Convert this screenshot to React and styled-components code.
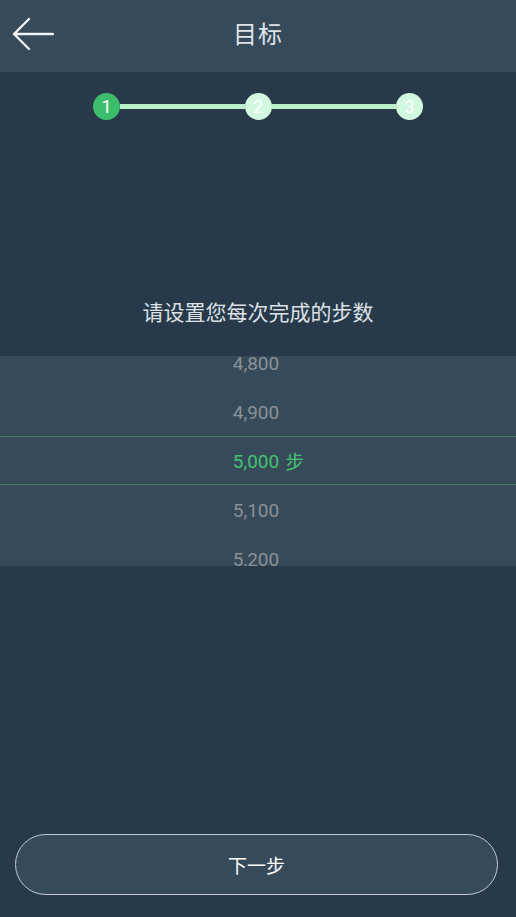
import styled, { createGlobalStyle } from "styled-components";

const GlobalStyle = createGlobalStyle`
  html, body {
    margin: 0;
    padding: 0;
    background: #283a4a;
    font-family: Roboto, "Noto Sans CJK SC", sans-serif;
  }
`;

const Page = styled.div`
  width: 516px;
  height: 917px;
  display: flex;
  flex-direction: column;
  background: #283a4a;
  overflow: hidden;
`;

const Header = styled.header`
  height: 72px;
  flex-shrink: 0;
  background: #364a5a;
  display: flex;
  align-items: center;
  justify-content: center;
  position: relative;
  .title {
    font-size: 24px;
    color: #dfe3e7;
    letter-spacing: 1px;
    margin-top: -7px;
  }
`;

const BackButton = styled.button`
  position: absolute;
  left: 10px;
  top: 16px;
  width: 46px;
  height: 36px;
  padding: 0;
  border: none;
  background: transparent;
  display: flex;
  align-items: center;
  justify-content: center;
`;

const Stepper = styled.div`
  display: flex;
  align-items: center;
  margin: 21px auto 0;
  width: 330px;
`;

const StepDot = styled.div`
  width: 27px;
  height: 27px;
  border-radius: 50%;
  flex-shrink: 0;
  background: ${(p) => (p.$active ? "#3cbd6c" : "#d2f9df")};
  color: #fff;
  font-size: 18px;
  display: flex;
  align-items: center;
  justify-content: center;
`;

const StepLine = styled.div`
  flex: 1;
  height: 5px;
  background: #b9efcb;
`;

const Prompt = styled.div`
  margin-top: 180px;
  text-align: center;
  font-size: 21px;
  color: #dde1e5;
  height: 26px;
  line-height: 26px;
`;

const Picker = styled.div`
  margin-top: 30px;
  height: 210px;
  background: #364a5a;
  overflow: hidden;
`;

const PickerList = styled.div`
  margin-top: -18.5px;
`;

const PickerRow = styled.div`
  height: 49px;
  padding-top: 3px;
  display: flex;
  align-items: center;
  justify-content: center;
  font-size: 19px;
  line-height: 24px;
  color: ${(p) => (p.$selected ? "#43c271" : "#8b9196")};
  box-sizing: border-box;
  border-top: ${(p) => (p.$selected ? "1px solid #3e7d5e" : "none")};
  border-bottom: ${(p) => (p.$selected ? "1px solid #3e7d5e" : "none")};
  .value {
    position: relative;
    margin-left: -4px;
  }
  .unit {
    position: absolute;
    top: 1px;
    left: 100%;
    margin-left: 6px;
    white-space: nowrap;
  }
`;

const Footer = styled.div`
  margin-top: auto;
  padding: 0 18px 22px 15px;
`;

const NextButton = styled.button`
  width: 100%;
  height: 61px;
  border-radius: 31px;
  border: 1px solid #c4cacf;
  background: #364a5a;
  color: #ffffff;
  font-size: 19px;
  font-family: Roboto, "Noto Sans CJK SC", sans-serif;
`;

const values = [4800, 4900, 5000, 5100, 5200];
const selected = 5000;

export default function App() {
  return (
    <Page>
      <GlobalStyle />
      <Header>
        <BackButton>
          <svg width="42" height="34" viewBox="0 0 42 34" fill="none">
            <path
              d="M41 17H3M17 2L2 17l15 15"
              stroke="#f2f4f6"
              strokeWidth="2.4"
              strokeLinecap="round"
              strokeLinejoin="round"
            />
          </svg>
        </BackButton>
        <span className="title">目标</span>
      </Header>
      <Stepper>
        <StepDot $active>1</StepDot>
        <StepLine />
        <StepDot>2</StepDot>
        <StepLine />
        <StepDot>3</StepDot>
      </Stepper>
      <Prompt>请设置您每次完成的步数</Prompt>
      <Picker>
        <PickerList>
          {values.map((v) => (
            <PickerRow key={v} $selected={v === selected}>
              <span className="value">
                {v.toLocaleString("en-US")}
                {v === selected && <span className="unit">步</span>}
              </span>
            </PickerRow>
          ))}
        </PickerList>
      </Picker>
      <Footer>
        <NextButton>下一步</NextButton>
      </Footer>
    </Page>
  );
}
